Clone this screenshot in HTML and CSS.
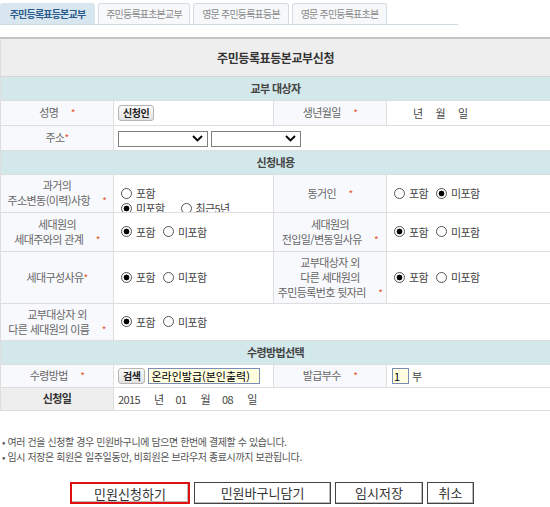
FILE: index.html
```html
<!DOCTYPE html>
<html lang="ko">
<head>
<meta charset="utf-8">
<link rel="stylesheet" href="styles.css">
</head>
<body>
<div class="tabs">
  <div class="tab active t1">주민등록표등본교부</div>
  <div class="tab t2">주민등록표초본교부</div>
  <div class="tab t3">영문 주민등록표등본</div>
  <div class="tab t4">영문 주민등록표초본</div>
</div>

<table class="form">
  <colgroup><col class="c1"><col class="c2"><col class="c3"><col class="c4"></colgroup>
  <tr class="title"><th colspan="4">주민등록표등본교부신청</th></tr>
  <tr class="sec"><th colspan="4">교부 대상자</th></tr>
  <tr class="r25">
    <th class="lbl">성명 &nbsp;&nbsp;&nbsp;&nbsp;<em>*</em></th>
    <td><button class="sbtn">신청인</button></td>
    <th class="lbl">생년월일 &nbsp;&nbsp;&nbsp;&nbsp;<em>*</em></th>
    <td class="date"><span>년</span><span>월</span><span>일</span></td>
  </tr>
  <tr class="r25">
    <th class="lbl">주소<em>*</em></th>
    <td colspan="3"><div class="sels"><span class="sel"><svg width="11" height="7" viewBox="0 0 11 7"><path d="M1 1l4.5 4.5L10 1" fill="none" stroke="#000" stroke-width="1.8"/></svg></span><span class="sel"><svg width="11" height="7" viewBox="0 0 11 7"><path d="M1 1l4.5 4.5L10 1" fill="none" stroke="#000" stroke-width="1.8"/></svg></span></div></td>
  </tr>
  <tr class="sec"><th colspan="4">신청내용</th></tr>
  <tr class="r38">
    <th class="lbl">과거의<br>주소변동(이력)사항 &nbsp;&nbsp;&nbsp;&nbsp;<em>*</em></th>
    <td><div class="clip">
      <div class="rg"><i class="rd"></i>포함</div>
      <div class="rg"><i class="rd on"></i>미포함<i class="rd sp"></i>최근5년</div>
    </div></td>
    <th class="lbl">동거인 &nbsp;&nbsp;&nbsp;&nbsp;<em>*</em></th>
    <td><div class="rg"><i class="rd"></i>포함<i class="rd on"></i>미포함</div></td>
  </tr>
  <tr class="r39">
    <th class="lbl">세대원의<br>세대주와의 관계 &nbsp;&nbsp;&nbsp;&nbsp;<em>*</em></th>
    <td><div class="rg"><i class="rd on"></i>포함<i class="rd"></i>미포함</div></td>
    <th class="lbl">세대원의<br>전입일/변동일사유 &nbsp;&nbsp;&nbsp;&nbsp;<em>*</em></th>
    <td><div class="rg"><i class="rd on"></i>포함<i class="rd"></i>미포함</div></td>
  </tr>
  <tr class="r52">
    <th class="lbl">세대구성사유<em>*</em></th>
    <td><div class="rg"><i class="rd on"></i>포함<i class="rd"></i>미포함</div></td>
    <th class="lbl">교부대상자 외<br>다른 세대원의<br>주민등록번호 뒷자리 &nbsp;&nbsp;&nbsp;&nbsp;<em>*</em></th>
    <td><div class="rg"><i class="rd on"></i>포함<i class="rd"></i>미포함</div></td>
  </tr>
  <tr class="r37">
    <th class="lbl">교부대상자 외<br>다른 세대원의 이름 &nbsp;&nbsp;&nbsp;&nbsp;<em>*</em></th>
    <td colspan="3"><div class="rg"><i class="rd on"></i>포함<i class="rd"></i>미포함</div></td>
  </tr>
  <tr class="sec"><th colspan="4">수령방법선택</th></tr>
  <tr class="r22">
    <th class="lbl">수령방법 &nbsp;&nbsp;&nbsp;&nbsp;<em>*</em></th>
    <td><div class="recv"><button class="sbtn">검색</button><span class="inp wide">온라인발급(본인출력)</span></div></td>
    <th class="lbl">발급부수 &nbsp;&nbsp;&nbsp;&nbsp;<em>*</em></th>
    <td><div class="recv"><span class="inp num">1</span>부</div></td>
  </tr>
  <tr class="r23">
    <th class="lbl gray">신청일</th>
    <td colspan="3" class="day"><span>2015</span><span>년</span><span>01</span><span>월</span><span>08</span><span>일</span></td>
  </tr>
</table>

<ul class="notes">
  <li>여러 건을 신청할 경우 민원바구니에 담으면 한번에 결제할 수 있습니다.</li>
  <li>임시 저장은 회원은 일주일동안, 비회원은 브라우저 종료시까지 보관됩니다.</li>
</ul>

<div class="actions">
  <button class="abtn b1">민원신청하기</button>
  <button class="abtn b2">민원바구니담기</button>
  <button class="abtn b3">임시저장</button>
  <button class="abtn b4">취소</button>
</div>
</body>
</html>
```
FILE: styles.css
```css
* { box-sizing: border-box; }
body {
  margin: 0;
  width: 550px;
  font-family: "Noto Sans CJK KR", "Noto Sans", sans-serif;
  font-size: 11px;
  color: #555;
  letter-spacing: -0.6px;
  background: #fff;
}
.tabs {
  display: flex;
  gap: 3px;
  width: 458px;
  height: 25px;
  padding-top: 3px;
  border-bottom: 1px solid #cfd9e0;
}
.tab {
  height: 21px;
  border: 1px solid #d3dce4;
  border-bottom: none;
  border-radius: 3px 3px 0 0;
  background: #f6f8fa;
  color: #8a8a8a;
  font-size: 10px;
  letter-spacing: -0.8px;
  line-height: 20px;
  text-align: center;
}
.tab.active {
  background: #d8e6ef;
  color: #2a5a8c;
  font-weight: bold;
  border-color: #d8e6ef;
}
.t1 { width: 95px; }
.t2 { width: 92px; }
.t3 { width: 96px; }
.t4 { width: 95px; }

.form {
  margin-top: 12px;
  width: 550px;
  border-collapse: collapse;
  table-layout: fixed;
  border: 1px solid #c8c8c8;
  border-top: 2px solid #c4c4c4;
}
.c1 { width: 113px; }
.c2 { width: 160px; }
.c3 { width: 113px; }
.c4 { width: 164px; }
.form th, .form td {
  border: 1px solid #dedede;
  padding: 0;
  font-weight: normal;
  vertical-align: middle;
}
.title th {
  height: 38px;
  background: #eeeeee;
  color: #333;
  font-weight: bold;
  font-size: 12px;
  letter-spacing: -0.4px;
  border-bottom: 1px solid #d6d6d6;
}
.sec th {
  height: 24px;
  background: #d3e8ea;
  color: #444;
  font-weight: bold;
  font-size: 11px;
}
.lbl {
  background: #f8f9fd;
  color: #666;
  text-align: center;
  line-height: 15px;
}
.lbl em {
  font-style: normal;
  color: #e4572e;
  font-size: 10px;
}
.lbl.gray {
  background: #eeeeee;
  color: #333;
  font-weight: bold;
}
.r25 { height: 25px; }
.r38 { height: 38px; }
.r39 { height: 39px; }
.r52 { height: 52px; }
.r37 { height: 37px; }
.r22 { height: 23px; }
.r23 { height: 23px; }
.form td { padding-left: 4px; color: #444; }
.sbtn {
  font-family: inherit;
  font-size: 10px;
  letter-spacing: -0.5px;
  color: #222;
  height: 16px;
  padding: 0 4px;
  line-height: 14px;
  border: 1px solid #b5b5b5;
  border-radius: 3px;
  background: linear-gradient(#fbfbfb, #e2e2e2);
  font-weight: bold;
}
.date { padding-left: 26px !important; }
.date span { margin-right: 13px; }
.sels { display: flex; gap: 3px; padding-top: 2px; }
.sel {
  width: 90px;
  height: 16px;
  border: 1px solid #7f7f7f;
  background: #fff;
  display: flex;
  justify-content: flex-end;
  align-items: center;
  padding-right: 4px;
}
.clip {
  height: 37px;
  overflow: hidden;
  padding-top: 11px;
}
.rg {
  display: flex;
  align-items: center;
  height: 15px;
  color: #444;
}
.rd {
  display: inline-block;
  width: 11px;
  height: 11px;
  border: 1px solid #555;
  border-radius: 50%;
  background: #fff;
  margin: 0 4px 0 3px;
}
.rg .rd:not(:first-child) { margin-left: 8px; }
.rg .rd.sp { margin-left: 16px; }
.rd.on {
  background: radial-gradient(circle, #000 0 2.6px, #fff 3.2px);
}
.recv { display: flex; align-items: center; gap: 3px; }
.inp {
  height: 16px;
  border: 1px solid #7a8db5;
  background: #ffffe0;
  color: #000;
  line-height: 14px;
  font-size: 11px;
  padding-left: 2px;
}
.inp.wide { width: 112px; letter-spacing: 0; }
.inp.num { width: 17px; margin-left: 1px; padding-left: 1px; }
.day span { margin-right: 12px; }
.day span:nth-child(odd) { margin-right: 14px; }
.notes {
  list-style: none;
  margin: 23px 0 0 0;
  padding: 0 0 0 2px;
  font-size: 10px;
  letter-spacing: -0.4px;
  line-height: 15px;
  color: #555;
}
.notes li::before { content: "• "; }
.actions {
  display: flex;
  gap: 4px;
  justify-content: flex-start;
  margin: 18px 0 0 70px;
}
.abtn {
  height: 22px;
  font-family: inherit;
  font-size: 13px;
  letter-spacing: 0;
  color: #333;
  background: #fff;
  border: 1px solid #444;
  box-shadow: inset -1px -1px #bbb, inset 1px 1px #fff;
  padding: 0;
}
.b1 { width: 120px; border: 2px solid #e01010; }
.b2 { width: 137px; }
.b3 { width: 88px; }
.b4 { width: 47px; }
```
